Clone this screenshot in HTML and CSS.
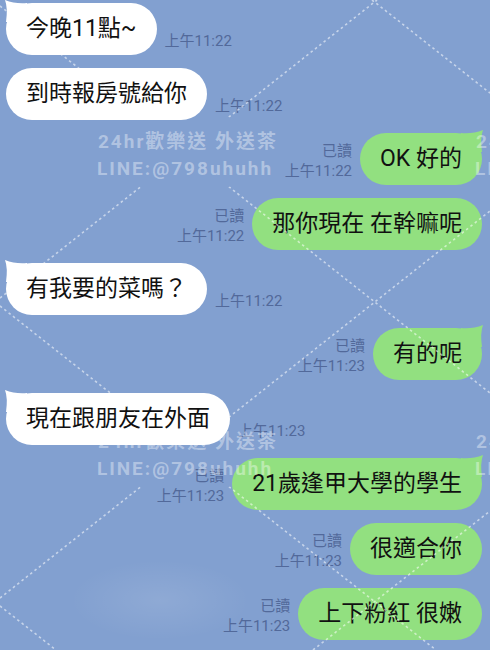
FILE: index.html
```html
<!DOCTYPE html>
<html lang="zh-Hant">
<head>
  <meta charset="UTF-8" />
  <meta name="viewport" content="width=device-width, initial-scale=1.0" />
  <title>LINE</title>
  <link rel="stylesheet" href="styles.css">
</head>
<body>
  <div class="chat">
    <div class="row in">
      <div class="bubble tail">今晚11點~</div>
      <div class="meta"><span>上午11:22</span></div>
    </div>
    <div class="row in">
      <div class="bubble">到時報房號給你</div>
      <div class="meta"><span>上午11:22</span></div>
    </div>
    <div class="row out">
      <div class="meta"><span>已讀</span><span>上午11:22</span></div>
      <div class="bubble tail">OK 好的</div>
    </div>
    <div class="row out">
      <div class="meta"><span>已讀</span><span>上午11:22</span></div>
      <div class="bubble">那你現在 在幹嘛呢</div>
    </div>
    <div class="row in">
      <div class="bubble tail">有我要的菜嗎？</div>
      <div class="meta"><span>上午11:22</span></div>
    </div>
    <div class="row out">
      <div class="meta"><span>已讀</span><span>上午11:23</span></div>
      <div class="bubble tail">有的呢</div>
    </div>
    <div class="row in">
      <div class="bubble tail">現在跟朋友在外面</div>
      <div class="meta"><span>上午11:23</span></div>
    </div>
    <div class="row out">
      <div class="meta"><span>已讀</span><span>上午11:23</span></div>
      <div class="bubble tail">21歲逢甲大學的學生</div>
    </div>
    <div class="row out">
      <div class="meta"><span>已讀</span><span>上午11:23</span></div>
      <div class="bubble">很適合你</div>
    </div>
    <div class="row out">
      <div class="meta"><span>已讀</span><span>上午11:23</span></div>
      <div class="bubble">上下粉紅 很嫩</div>
    </div>
  </div>

  <!-- watermark layer, sits over the whole screenshot -->
  <svg class="overlay" viewBox="0 0 490 650">
    <defs>
      <mask id="gaps">
        <rect width="490" height="650" fill="#fff" />
        <ellipse cx="185" cy="152" rx="70" ry="45" fill="#000" />
        <ellipse cx="185" cy="452" rx="70" ry="45" fill="#000" />
        <ellipse cx="565" cy="152" rx="70" ry="45" fill="#000" />
        <ellipse cx="565" cy="452" rx="70" ry="45" fill="#000" />
      </mask>
    </defs>
    <g class="lines" mask="url(#gaps)">
      <line x1="372" y1="0" x2="490" y2="93" />
      <line x1="0" y1="6" x2="490" y2="393" />
      <line x1="0" y1="306" x2="436" y2="650" />
      <line x1="0" y1="606" x2="56" y2="650" />
      <line x1="0" y1="298" x2="377" y2="0" />
      <line x1="0" y1="598" x2="490" y2="211" />
      <line x1="313" y1="650" x2="490" y2="511" />
    </g>
    <g class="mark">
      <text x="188" y="148">24hr歡樂送 外送茶</text>
      <text x="185" y="175">LINE:@798uhuhh</text>
      <text x="188" y="448">24hr歡樂送 外送茶</text>
      <text x="185" y="475">LINE:@798uhuhh</text>
      <text x="566" y="148">24hr歡樂送 外送茶</text>
      <text x="563" y="175">LINE:@798uhuhh</text>
      <text x="566" y="448">24hr歡樂送 外送茶</text>
      <text x="563" y="475">LINE:@798uhuhh</text>
    </g>
  </svg>
</body>
</html>
```

FILE: styles.css
```css
* {
  box-sizing: border-box;
}

html, body {
  margin: 0;
  height: 100%;
}

body {
  position: relative;
  overflow: hidden;
  background:
    radial-gradient(ellipse 90px 40px at 160px 600px, rgba(255, 255, 255, 0.1), transparent),
    #82a0d0;
  font-family: Roboto, "Noto Sans CJK TC", sans-serif;
}

.chat {
  display: flex;
  flex-direction: column;
  gap: 13px;
  padding: 3px 8px 0 6px;
}

.row {
  display: flex;
  align-items: flex-end;
  gap: 8px;
}

.row.out {
  justify-content: flex-end;
}

.bubble {
  position: relative;
  padding: 11px 20px;
  border-radius: 26px;
  background: #fff;
  color: #111;
  font-size: 23px;
  line-height: 30px;
  white-space: nowrap;
}

.out .bubble {
  background: #92e080;
}

/* little hook on the first bubble of a group */
.bubble.tail::before {
  content: "";
  position: absolute;
  top: -3px;
  left: -1px;
  width: 22px;
  height: 22px;
  background: inherit;
  clip-path: path('M0 0 Q10 4 22 3 L22 22 L1 22 Q3 8 0 0 Z');
}

.out .bubble.tail::before {
  left: auto;
  right: -1px;
  transform: scaleX(-1);
}

.meta {
  display: flex;
  flex-direction: column;
  margin-bottom: 4px;
  font-size: 15px;
  line-height: 20px;
  color: #52699a;
  white-space: nowrap;
}

.out .meta {
  align-items: flex-end;
}

.overlay {
  position: absolute;
  top: 0;
  left: 0;
  width: 490px;
  height: 650px;
  pointer-events: none;
}

.lines line {
  stroke: rgba(255, 255, 255, 0.55);
  stroke-width: 1.6;
  stroke-dasharray: 2.5 3;
}

.mark text {
  fill: rgba(255, 255, 255, 0.38);
  font: bold 19px Roboto, "Noto Sans CJK TC", sans-serif;
  letter-spacing: 2px;
  text-anchor: middle;
}
```
